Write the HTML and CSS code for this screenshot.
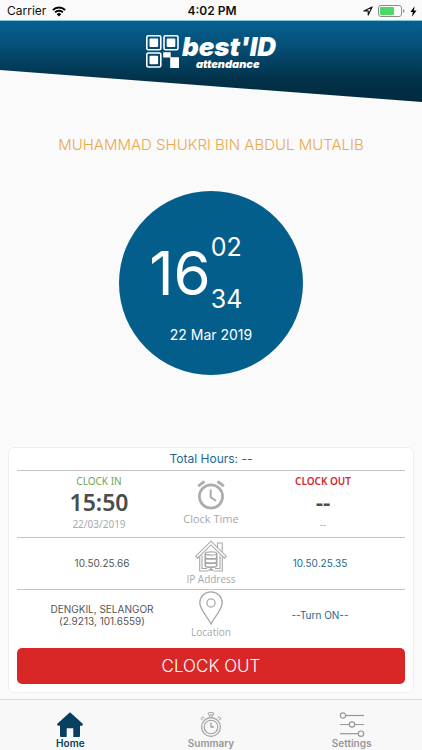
FILE: index.html
```html
<!DOCTYPE html>
<html lang="en">
<head>
<meta charset="utf-8">
<meta name="viewport" content="width=device-width, initial-scale=1">
<title>best'ID attendance</title>
<link rel="stylesheet" href="styles.css">
</head>
<body>
<div class="status">
  <div class="status-left">
    <span>Carrier</span>
    <svg width="14" height="11" viewBox="0 0 14 11" aria-hidden="true">
      <path d="M.9 4a8.700 8.700 0 0 1 12.200 0M3.100 6.300a5.500 5.500 0 0 1 7.800 0" fill="none" stroke="#000" stroke-width="1.900"/>
      <path d="M7 10.500 4.700 8.200a3.300 3.300 0 0 1 4.600 0z"/>
    </svg>
  </div>
  <div class="status-time">4:02 PM</div>
  <div class="status-right">
    <svg width="10" height="10" viewBox="0 0 10 10" aria-hidden="true"><path d="M.9 4.900 9.100.9 5.200 9.100V4.900z" fill="none" stroke="#111" stroke-width="1.100" stroke-linejoin="round"/></svg>
    <svg width="27" height="12" viewBox="0 0 27 12" aria-hidden="true">
      <rect x=".5" y=".5" width="23" height="11" rx="2.500" fill="#fff" stroke="#8c8c8c"/>
      <rect x="2" y="2" width="14" height="8" rx="1" fill="#4cd964"/>
      <path d="M25 4v4q1.400-.6 1.400-2T25 4z" fill="#8c8c8c"/>
    </svg>
    <svg width="7" height="11" viewBox="0 0 7 11" aria-hidden="true"><path d="M4.600.3.400 6.100h2.400L2 10.700l4.500-6.100H3.900z"/></svg>
  </div>
</div>

<header class="banner">
  <svg width="33" height="33" viewBox="0 0 33 33" aria-hidden="true">
    <g fill="none" stroke="#fff" stroke-width="1.600">
      <rect x=".8" y=".8" width="14" height="14" rx="1.500"/>
      <rect x="18" y=".8" width="14" height="14" rx="1.500"/>
      <rect x=".8" y="18" width="14" height="14" rx="1.500"/>
    </g>
    <g fill="#fff">
      <rect x="3.500" y="3.500" width="8.600" height="8.600" rx="1"/>
      <rect x="20.700" y="3.500" width="8.600" height="8.600" rx="1"/>
      <rect x="3.500" y="20.700" width="8.600" height="8.600" rx="1"/>
      <path d="M17.200 17.200h7.500v5H33V33h-8.800V22.500h-7z"/>
    </g>
  </svg>
  <div class="brand">
    <span class="brand-name">best'ID</span>
    <span class="brand-sub">attendance</span>
  </div>
</header>

<main class="main">
  <h1 class="user">MUHAMMAD SHUKRI BIN ABDUL MUTALIB</h1>

  <section class="dial">
    <div class="dial-time">
      <span class="hours">16</span>
      <div class="minor"><span>02</span><span>34</span></div>
    </div>
    <div class="dial-date">22 Mar 2019</div>
  </section>

  <section class="card">
    <h2 class="total">Total Hours: --</h2>
    <div class="row row-clock">
      <div class="stack">
        <span class="tag tag-in">CLOCK IN</span>
        <strong class="clock">15:50</strong>
        <span class="date">22/03/2019</span>
      </div>
      <div class="kind kind-large">
        <svg width="28" height="30" viewBox="0 0 28 30" fill="none" stroke="#adadad" aria-hidden="true">
          <circle cx="14" cy="16.500" r="11.600" stroke-width="2.700"/>
          <path d="M1.200 6.200 7.500 1.300M26.800 6.200 20.500 1.300" stroke-width="2.800"/>
          <path d="M13.700 9.500v7.700l5.300 3.600" stroke-width="2"/>
        </svg>
        <span>Clock Time</span>
      </div>
      <div class="stack">
        <span class="tag tag-out">CLOCK OUT</span>
        <strong class="clock">--</strong>
        <span class="date">--</span>
      </div>
    </div>
    <div class="row row-ip">
      <div class="value">10.50.25.66</div>
      <div class="kind">
        <svg width="32" height="32" viewBox="0 0 32 32" fill="none" stroke="#a8a8a8" stroke-width="1.100" aria-hidden="true">
          <path d="M.8 16.200 16 1.200l15.200 15-1.800 1.900L16 4.900 2.600 18.100z"/>
          <path d="M22.500 7V3h4.700v8.800M4.700 17v14h8.600M27.300 17v14h-8.600M7 15.500v13h5M25 15.500v13h-5"/>
          <ellipse cx="16" cy="13.500" rx="5.700" ry="1.600"/>
          <path d="M10.300 13.500v12c0 2.300 11.400 2.300 11.400 0v-12M10.300 17.200c0 2.300 11.400 2.300 11.400 0M10.300 21.400c0 2.300 11.400 2.300 11.400 0M16 27.500v2.500M13.500 30h5" stroke-width="1.700"/>
        </svg>
        <span>IP Address</span>
      </div>
      <div class="value value-link">10.50.25.35</div>
    </div>
    <div class="row row-place">
      <div class="value">DENGKIL, SELANGOR<br>(2.9213, 101.6559)</div>
      <div class="kind">
        <svg width="24" height="34" viewBox="0 0 24 34" fill="none" stroke="#a8a8a8" stroke-width="1.300" aria-hidden="true">
          <path d="M12 33C9.500 27.500.8 18.500.8 12a11.200 11.200 0 0 1 22.400 0C23.200 18.500 14.500 27.500 12 33z"/>
          <circle cx="12" cy="12" r="4.100"/>
        </svg>
        <span>Location</span>
      </div>
      <a class="value value-link" href="#location">--Turn ON--</a>
    </div>
    <button class="clock-out" type="button">CLOCK OUT</button>
  </section>
</main>

<nav class="tabs">
  <a class="tab tab-active" href="#home">
    <svg width="26" height="25" viewBox="0 0 26 25" aria-hidden="true"><path d="M13 .3 26 12l-.8 1.700H23v10.300q0 1-1 1h-5.700v-8.800H9.700V25H4q-1 0-1-1V13.700H.8L0 12z" fill="#063f5f"/></svg>
    <span>Home</span>
  </a>
  <a class="tab" href="#summary">
    <svg width="22" height="25" viewBox="0 0 22 25" fill="none" stroke="#a0a0a0" aria-hidden="true">
      <circle cx="11" cy="15" r="9.400" stroke-width="1.200"/>
      <circle cx="11" cy="15" r="6.800" stroke-width="1.100"/>
      <rect x="8.200" y=".6" width="5.600" height="2.400" rx="1"/>
      <path d="M9.700 3v2.600M12.300 3v2.600M3 8 1 6.600l1.800-2L4.600 6.300M19 8l2-1.400-1.800-2-1.800 1.700"/>
      <path d="M11 10.500V15h3" stroke-width="1.300"/>
    </svg>
    <span>Summary</span>
  </a>
  <a class="tab" href="#settings">
    <svg width="26" height="25" viewBox="0 0 26 25" fill="none" stroke="#979797" stroke-width="1.200" aria-hidden="true">
      <circle cx="4" cy="3.500" r="2.700"/><path d="M6.700 3.500H25"/>
      <circle cx="13" cy="12.500" r="2.700"/><path d="M1 12.500h9.300M15.700 12.500H25"/>
      <circle cx="22" cy="21.700" r="2.700"/><path d="M1 21.700h18.300"/>
    </svg>
    <span>Settings</span>
  </a>
</nav>
</body>
</html>
```
FILE: styles.css
```css
* { box-sizing: border-box; }

body {
  margin: 0;
  min-height: 100vh;
  display: flex;
  flex-direction: column;
  background: #fafafa;
  color: #555;
  font-family: Inter, "Liberation Sans", sans-serif;
}

svg { display: block; flex: none; }
a { color: inherit; text-decoration: none; }

.status {
  display: grid;
  grid-template-columns: 1fr auto 1fr;
  align-items: center;
  height: 20px;
  padding: 2px 5px 0 7px;
  color: #111;
  font-size: 12px;
  line-height: 18px;
}
.status-left, .status-right { display: flex; align-items: center; gap: 6px; }
.status-right { justify-content: flex-end; gap: 5px; }
.status-time { font-weight: 600; }

.banner {
  display: flex;
  justify-content: center;
  align-items: flex-start;
  gap: 3px;
  height: 82px;
  padding-top: 14px;
  border-top: 1px solid #8fc3da;
  background: linear-gradient(#06618f, #045079 30%, #023249 72%, #022a3e);
  clip-path: polygon(0 0, 100% 0, 100% 100%, 0 50px);
  color: #fff;
}
.brand {
  display: flex;
  flex-direction: column;
  font-style: italic;
  font-weight: 900;
}
.brand-name { font-size: 26px; line-height: 23px; }
.brand-sub { padding-left: 14px; font-size: 11px; line-height: 13px; }

.main {
  flex: 1;
  display: flex;
  flex-direction: column;
  align-items: center;
  padding: 33px 8px 6px;
}
.user {
  margin: 0;
  color: #e9a94c;
  font-size: 15px;
  font-weight: 300;
  line-height: 20px;
  text-align: center;
}

.dial {
  width: 184px;
  height: 184px;
  margin: 36px 0;
  padding-top: 30px;
  border-radius: 50%;
  background: #045e8b;
  color: #fff;
  text-align: center;
}
.dial-time { display: flex; justify-content: center; align-items: center; }
.hours { font-size: 60px; line-height: 60px; }
.minor {
  display: flex;
  flex-direction: column;
  width: 62px;
  font-size: 25px;
  font-weight: 400;
  line-height: 52px;
  text-align: left;
}
.dial-date { font-size: 14px; line-height: 20px; }

.card {
  width: 100%;
  margin-top: auto;
  padding: 0 8px 8px;
  border: 1px solid #efefef;
  border-radius: 6px;
  background: #fff;
}
.total {
  margin: 0;
  color: #1d688f;
  font-size: 12px;
  font-weight: 400;
  line-height: 22px;
  text-align: center;
}
.row {
  display: grid;
  grid-template-columns: 1fr 48px 1fr;
  align-items: center;
  border-top: 1px solid #c4c4c4;
  text-align: center;
}
.row-clock {
  grid-template-columns: 1fr 60px 1fr;
  height: 67px;
  padding-bottom: 2px;
}
.row-ip { height: 52px; padding-bottom: 2px; }
.row-place { height: 59px; padding-bottom: 8px; }

.stack {
  display: flex;
  flex-direction: column;
  font-family: "Noto Sans", "Open Sans", sans-serif;
}
.tag { font-size: 10px; line-height: 16px; }
.tag-in { color: #6aa558; }
.tag-out { color: #d02a2c; font-weight: 600; }
.clock {
  color: #4c4c4c;
  font-size: 23px;
  font-weight: 600;
  line-height: 26px;
}
.date { color: #aaa; font-size: 10px; line-height: 18px; }

.kind {
  display: flex;
  flex-direction: column;
  align-items: center;
  color: #a8a8a8;
  font-family: "Open Sans", "Noto Sans", sans-serif;
  font-size: 10px;
  line-height: 14px;
  white-space: nowrap;
}
.kind-large { gap: 2px; font-size: 11px; }

.value { font-size: 10px; line-height: 12px; }
.value-link { color: #1d688f; }

.clock-out {
  display: block;
  width: 100%;
  height: 36px;
  padding: 0;
  border: 0;
  border-radius: 5px;
  background: #d92728;
  color: #fff;
  font: 300 17px/36px Inter, "Liberation Sans", sans-serif;
}

.tabs {
  display: grid;
  grid-template-columns: repeat(3, 1fr);
  height: 51px;
  padding-top: 12px;
  border-top: 1px solid #dcdcdc;
  background: #f8f8f8;
}
.tab {
  display: flex;
  flex-direction: column;
  align-items: center;
  color: #979797;
  font-size: 10px;
  font-weight: 600;
  line-height: 12px;
}
.tab-active { color: #063f5f; }
```
